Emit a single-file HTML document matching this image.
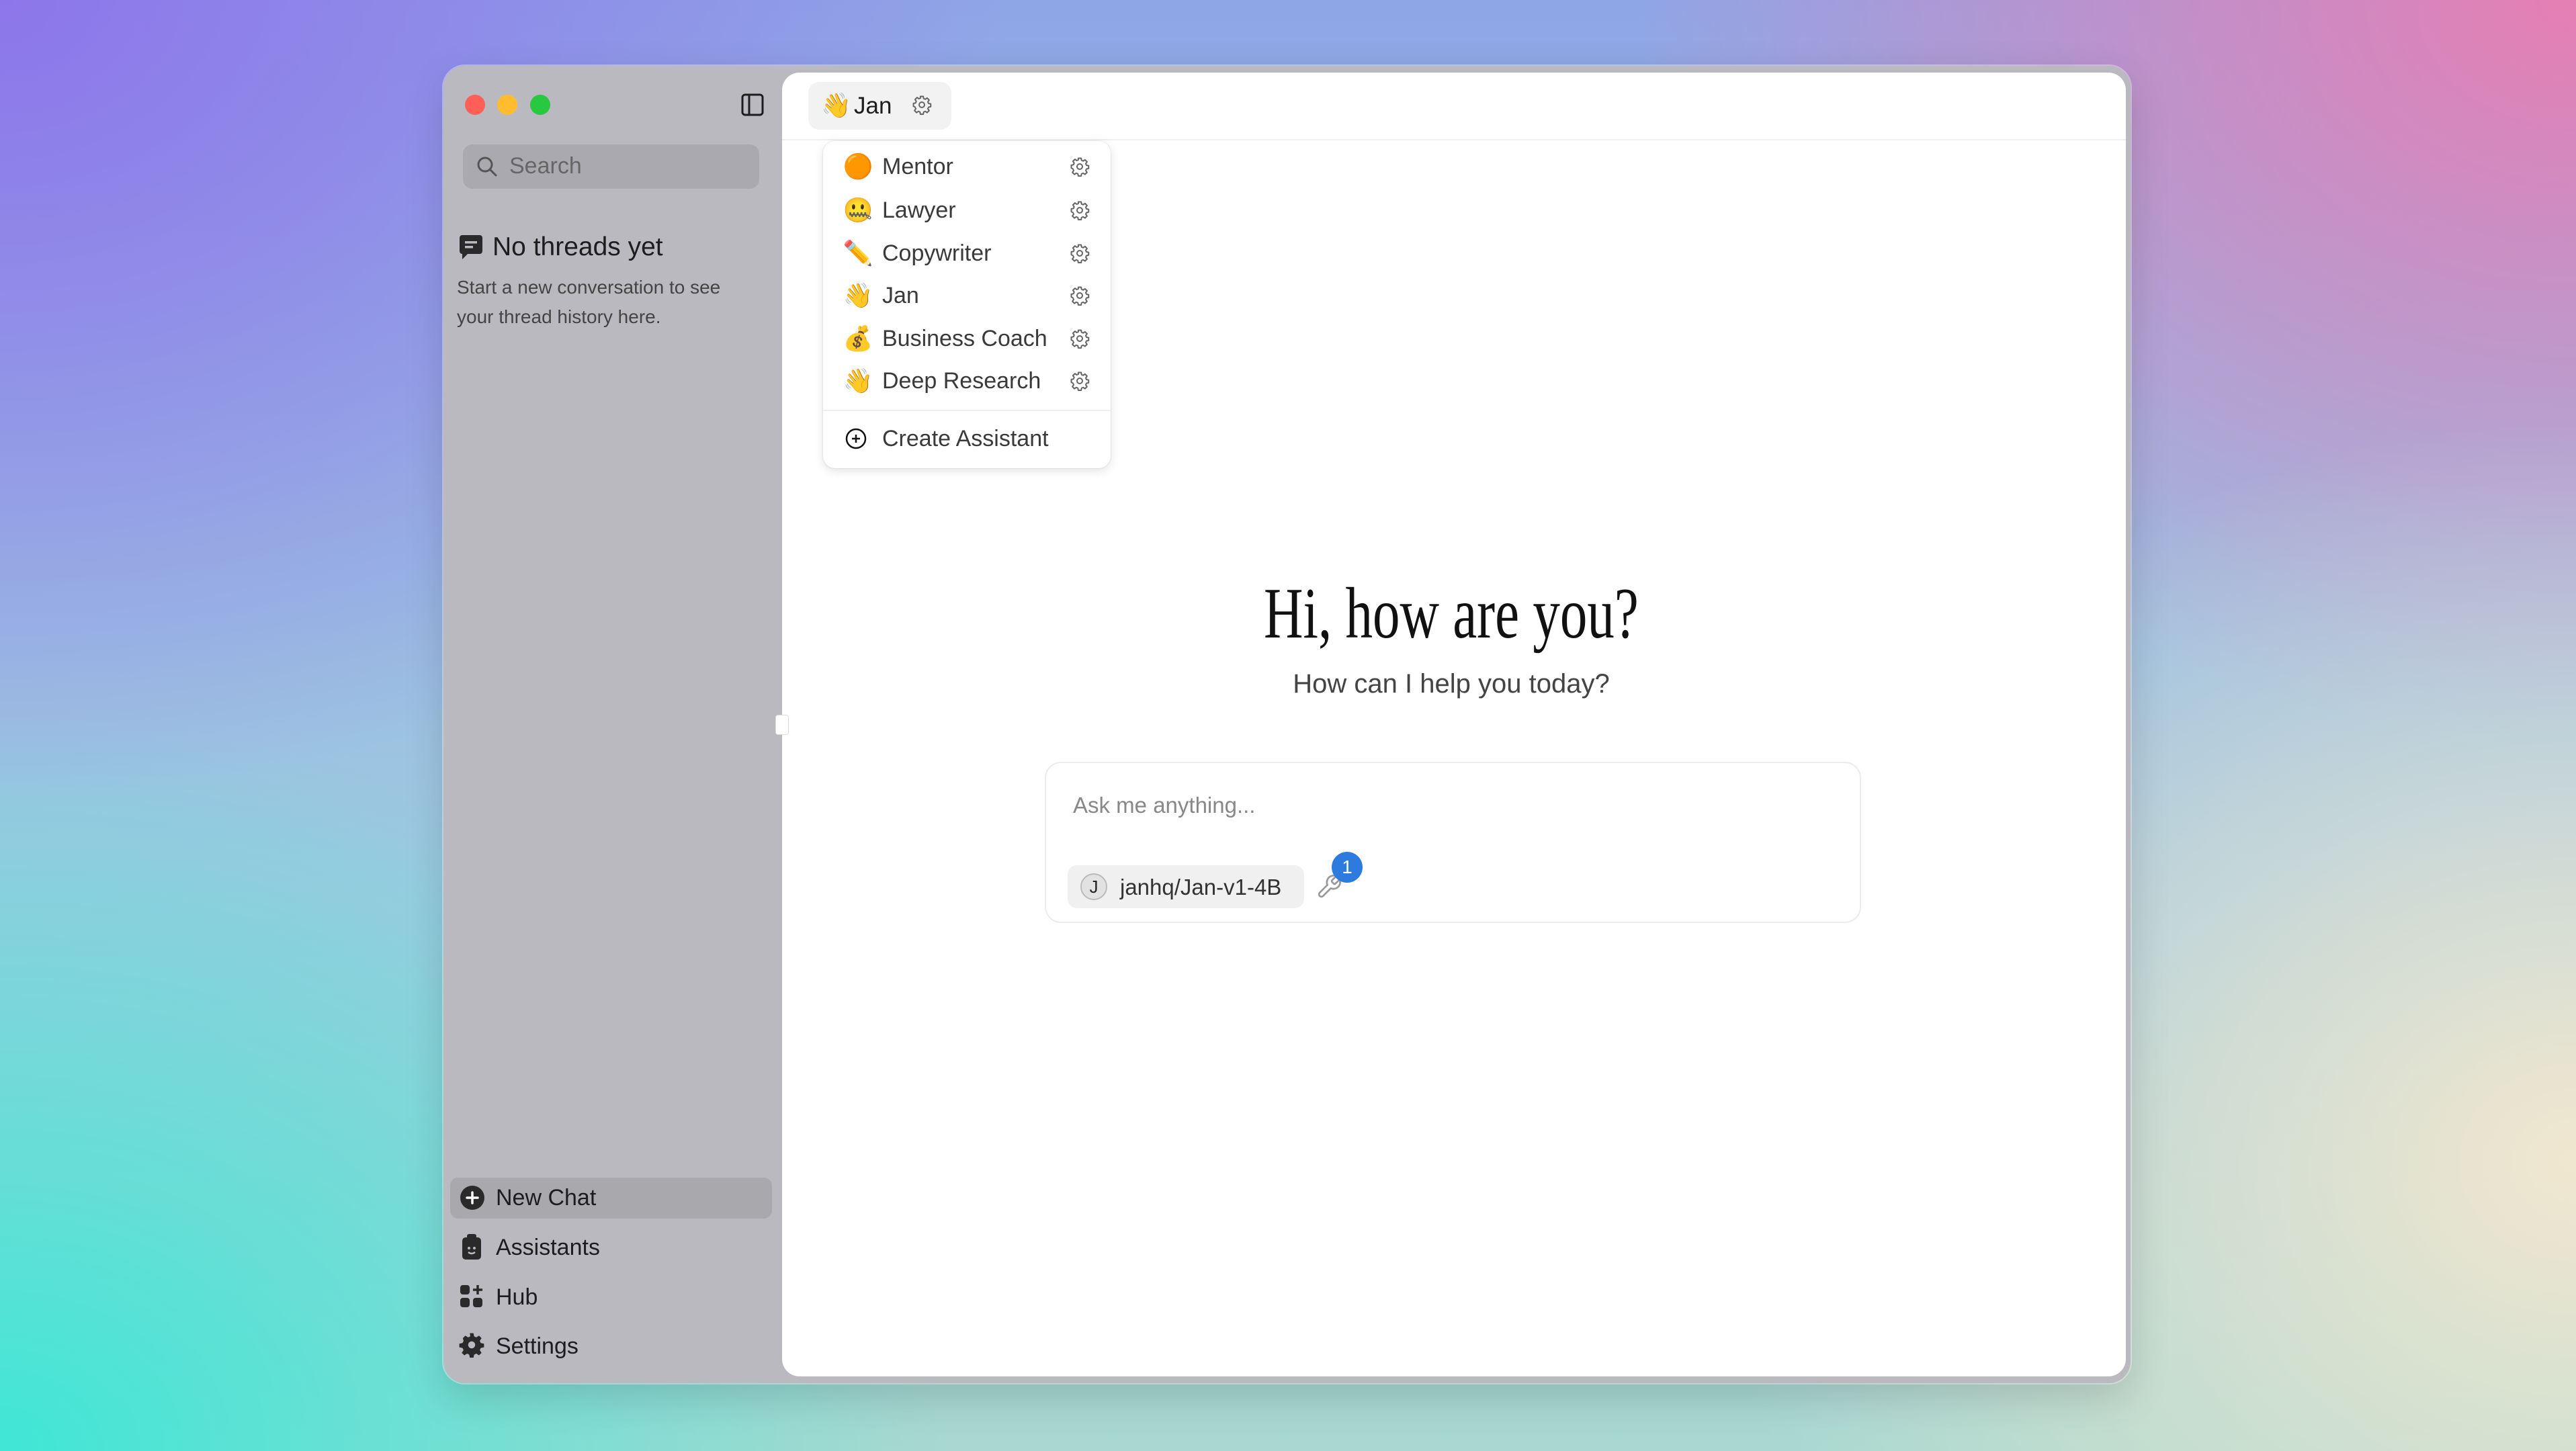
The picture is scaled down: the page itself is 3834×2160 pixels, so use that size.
<!DOCTYPE html>
<html><head><meta charset="utf-8"><style>
*{margin:0;padding:0;box-sizing:border-box}
html,body{width:3834px;height:2160px;overflow:hidden}
body{position:relative;font-family:"Liberation Sans","Noto Sans CJK JP",sans-serif;
background:
radial-gradient(ellipse 1400px 1100px at 0% 100%,#3fe6d6 0%,rgba(63,230,214,0) 100%),
radial-gradient(ellipse 1300px 1100px at 100% 80%,#f1e7cf 0%,rgba(241,231,207,0) 100%),
radial-gradient(ellipse 1400px 1100px at 100% 0%,#e67fb3 0%,rgba(230,127,179,0) 100%),
radial-gradient(ellipse 1500px 1200px at 0% 0%,#8d76ea 0%,rgba(141,118,234,0) 100%),
linear-gradient(180deg,#8fa5e6 0%,#9fc8e0 60%,#a8d8d0 100%);}
.a{position:absolute}
.win{left:660px;top:98px;width:2511px;height:1961px;border-radius:32px;background:#b9b9bf;box-shadow:0 0 0 2px rgba(255,255,255,.35),0 20px 60px rgba(0,0,0,.15);overflow:hidden}
.main{left:1164px;top:108px;width:2000px;height:1941px;background:#fff;border-radius:26px}
.tl{width:30px;height:30px;border-radius:50%;top:141px}
.t{color:#1d1d1f;white-space:nowrap}
.nav{font-size:34px;color:#1d1d1f}
.item{position:absolute;left:1254px;font-size:34px;color:#3a3a3a;white-space:nowrap;line-height:40px;height:40px}
.item .e{position:absolute;left:0;top:0;width:46px;text-align:center;font-size:36px;line-height:40px}
.item .n{position:absolute;left:59px;top:0}
.gear{position:absolute;left:1592px;width:30px;height:30px}
</style></head><body>
<div class="a win"></div>
<div class="a tl" style="left:692px;background:#fe5f57"></div>
<div class="a tl" style="left:740px;background:#febc2e"></div>
<div class="a tl" style="left:789px;background:#28c840"></div>
<svg class="a" style="left:1102px;top:138px" width="36" height="36" viewBox="0 0 36 36"><rect x="3" y="3" width="30" height="30" rx="4" fill="none" stroke="#1d1d1f" stroke-width="3"/><line x1="13" y1="3" x2="13" y2="33" stroke="#1d1d1f" stroke-width="3"/></svg>
<div class="a" style="left:689px;top:215px;width:441px;height:66px;border-radius:14px;background:#a9a9af"></div>
<svg class="a" style="left:707px;top:230px" width="36" height="36" viewBox="0 0 36 36"><circle cx="15" cy="15" r="10" fill="none" stroke="#555" stroke-width="3"/><line x1="22" y1="22" x2="31" y2="31" stroke="#555" stroke-width="3" stroke-linecap="round"/></svg>
<div class="a" style="left:758px;top:228px;font-size:34px;color:#666">Search</div>
<svg class="a" style="left:682px;top:348px" width="38" height="40" viewBox="0 0 38 40"><path d="M6 2h26a4 4 0 0 1 4 4v20a4 4 0 0 1-4 4H14l-8 8v-8a4 4 0 0 1-4-4V6a4 4 0 0 1 4-4z" fill="#2a2a2a"/><rect x="10" y="11" width="18" height="3.5" fill="#b9b9bf"/><rect x="10" y="18" width="12" height="3.5" fill="#b9b9bf"/></svg>
<div class="a t" style="left:733px;top:346px;font-size:39px">No threads yet</div>
<div class="a" style="left:680px;top:406px;font-size:28px;color:#444;line-height:44px">Start a new conversation to see<br>your thread history here.</div>

<div class="a" style="left:670px;top:1753px;width:479px;height:61px;border-radius:12px;background:#a8a8ad"></div>
<svg class="a" style="left:684px;top:1764px" width="38" height="38" viewBox="0 0 38 38"><circle cx="19" cy="19" r="18" fill="#2a2a2a"/><path d="M19 11v16M11 19h16" stroke="#fff" stroke-width="3.5" stroke-linecap="round"/></svg>
<div class="a nav" style="left:738px;top:1764px">New Chat</div>
<svg class="a" style="left:686px;top:1836px" width="32" height="40" viewBox="0 0 32 40"><rect x="9" y="1" width="14" height="7" rx="3" fill="#2a2a2a"/><rect x="2" y="6" width="28" height="33" rx="5" fill="#2a2a2a"/><circle cx="12" cy="22" r="2" fill="#b9b9bf"/><circle cx="20" cy="22" r="2" fill="#b9b9bf"/><path d="M11 28q5 4 10 0" stroke="#b9b9bf" stroke-width="2.5" fill="none"/></svg>
<div class="a nav" style="left:738px;top:1838px">Assistants</div>
<svg class="a" style="left:684px;top:1912px" width="36" height="36" viewBox="0 0 36 36"><rect x="1" y="1" width="14" height="14" rx="4" fill="#2a2a2a"/><rect x="1" y="20" width="14" height="14" rx="4" fill="#2a2a2a"/><rect x="20" y="20" width="14" height="14" rx="4" fill="#2a2a2a"/><path d="M27 1v14M20 8h14" stroke="#2a2a2a" stroke-width="3.5"/></svg>
<div class="a nav" style="left:738px;top:1912px">Hub</div>
<svg class="a" style="left:683px;top:1983px" width="38" height="38" viewBox="0 0 24 24"><path fill="#2a2a2a" d="M10.3 1h3.4l.6 3 2 1 2.6-1.7 2.4 2.4L19.6 8.3l1 2 3 .6v3.4l-3 .6-1 2 1.7 2.6-2.4 2.4-2.6-1.7-2 1-.6 3h-3.4l-.6-3-2-1-2.6 1.7-2.4-2.4 1.7-2.6-1-2-3-.6v-3.4l3-.6 1-2L3.7 5.7l2.4-2.4 2.6 1.7 2-1z"/><circle cx="12" cy="12" r="3.3" fill="#b9b9bf"/></svg>
<div class="a nav" style="left:738px;top:1985px">Settings</div>

<div class="a main"></div>
<div class="a" style="left:1164px;top:207px;width:2000px;height:2px;background:#efefef"></div>
<div class="a" style="left:1154px;top:1064px;width:20px;height:30px;border-radius:4px;background:#fff;border:1px solid #ddd"></div>
<div class="a" style="left:1203px;top:122px;width:213px;height:71px;border-radius:16px;background:#f2f2f2"></div>
<div class="a t" style="left:1222px;top:136px;font-size:36px">👋</div>
<div class="a t" style="left:1271px;top:138px;font-size:35px">Jan</div>

<div class="a" style="left:1225px;top:210px;width:428px;height:487px;border-radius:18px;background:#fff;box-shadow:0 4px 14px rgba(0,0,0,.12),0 0 0 1px rgba(0,0,0,.05)"></div>
<div class="a" style="left:1225px;top:610px;width:428px;height:2px;background:#efefef"></div>
<div class="item" style="top:228px"><span class="e">🟠</span><span class="n">Mentor</span></div>
<div class="item" style="top:293px"><span class="e">🤐</span><span class="n">Lawyer</span></div>
<div class="item" style="top:357px"><span class="e">✏️</span><span class="n">Copywriter</span></div>
<div class="item" style="top:420px"><span class="e">👋</span><span class="n">Jan</span></div>
<div class="item" style="top:484px"><span class="e">💰</span><span class="n">Business Coach</span></div>
<div class="item" style="top:547px"><span class="e">👋</span><span class="n">Deep Research</span></div>
<svg class="a" style="left:1257px;top:636px" width="34" height="34" viewBox="0 0 34 34"><circle cx="17" cy="17" r="14" fill="none" stroke="#111" stroke-width="2.5"/><path d="M17 11v12M11 17h12" stroke="#111" stroke-width="2.5"/></svg>
<div class="item" style="top:633px"><span class="n">Create Assistant</span></div>

<svg width="0" height="0" style="position:absolute"><defs><symbol id="g" viewBox="0 0 24 24"><path fill="none" stroke="#666" stroke-width="1.6" stroke-linejoin="round" d="M10.3 2h3.4l.5 2.6 1.9.8 2.2-1.5 2.4 2.4-1.5 2.2.8 1.9 2.6.5v3.4l-2.6.5-.8 1.9 1.5 2.2-2.4 2.4-2.2-1.5-1.9.8-.5 2.6h-3.4l-.5-2.6-1.9-.8-2.2 1.5-2.4-2.4 1.5-2.2-.8-1.9L2 13.7v-3.4l2.6-.5.8-1.9-1.5-2.2 2.4-2.4 2.2 1.5 1.9-.8z"/><circle cx="12" cy="12" r="3.2" fill="none" stroke="#666" stroke-width="1.6"/></symbol></defs></svg>
<svg class="gear" style="left:1357px;top:141px"><use href="#g"/></svg>
<svg class="gear" style="top:233px"><use href="#g"/></svg>
<svg class="gear" style="top:298px"><use href="#g"/></svg>
<svg class="gear" style="top:362px"><use href="#g"/></svg>
<svg class="gear" style="top:425px"><use href="#g"/></svg>
<svg class="gear" style="top:489px"><use href="#g"/></svg>
<svg class="gear" style="top:552px"><use href="#g"/></svg>

<div class="a" style="left:1660px;top:852px;width:1000px;text-align:center"><span style="display:inline-block;font-family:'Liberation Serif',serif;font-size:108px;color:#111;transform:scaleX(.75);white-space:nowrap">Hi, how are you?</span></div>
<div class="a" style="left:1660px;top:996px;width:1000px;text-align:center;font-size:40px;color:#444">How can I help you today?</div>

<div class="a" style="left:1555px;top:1134px;width:1215px;height:240px;border-radius:24px;border:2px solid #ececec;background:#fff"></div>
<div class="a" style="left:1597px;top:1180px;font-size:33px;color:#888">Ask me anything...</div>
<div class="a" style="left:1589px;top:1288px;width:352px;height:64px;border-radius:14px;background:#f0f0f0"></div>
<div class="a" style="left:1608px;top:1300px;width:40px;height:40px;border-radius:50%;background:#e2e2e2;border:2px solid #bbb;font-size:26px;text-align:center;line-height:36px;color:#222">J</div>
<div class="a t" style="left:1667px;top:1302px;font-size:33px;color:#333">janhq/Jan-v1-4B</div>
<svg class="a" style="left:1958px;top:1300px" width="40" height="40" viewBox="0 0 24 24"><path fill="none" stroke="#999" stroke-width="1.6" stroke-linejoin="round" d="M14.7 6.3a1 1 0 0 0 0 1.4l1.6 1.6a1 1 0 0 0 1.4 0l3.8-3.8a6 6 0 0 1-7.9 7.9l-6.9 6.9a2.1 2.1 0 0 1-3-3l6.9-6.9a6 6 0 0 1 7.9-7.9z"/></svg>
<div class="a" style="left:1982px;top:1268px;width:46px;height:46px;border-radius:50%;background:#2e7be0;color:#fff;font-size:28px;text-align:center;line-height:46px">1</div>
</body></html>
